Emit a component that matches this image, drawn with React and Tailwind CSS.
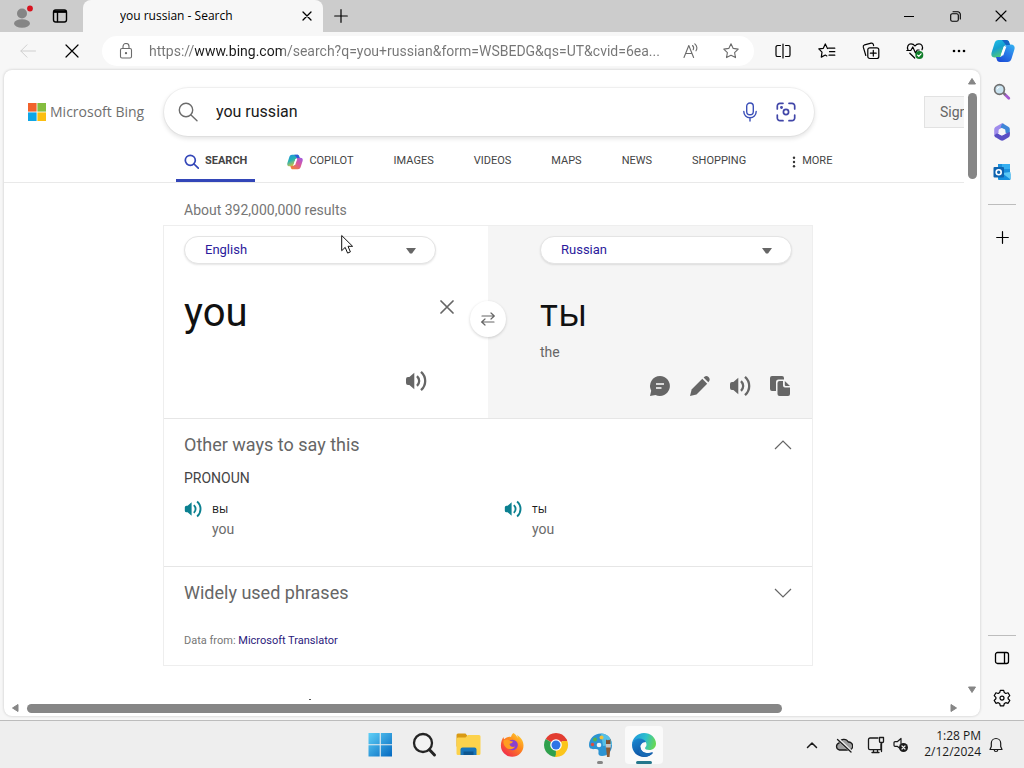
import React from "react";

const UI = "font-['Open_Sans','Noto_Sans',sans-serif]";

/* ---------- generic icons ---------- */

function Line({ size = 16, w = 1, children, className = "" }) {
  return (
    <svg
      width={size}
      height={size}
      viewBox={`0 0 ${size} ${size}`}
      fill="none"
      stroke="currentColor"
      strokeWidth={w}
      strokeLinecap="round"
      strokeLinejoin="round"
      className={`shrink-0 ${className}`}
      aria-hidden="true"
    >
      {children}
    </svg>
  );
}

const Cross = ({ size = 14, w = 1.1, className }) => (
  <Line size={size} w={w} className={className}>
    <path d={`M1 1 ${size - 1} ${size - 1}M${size - 1} 1 1 ${size - 1}`} />
  </Line>
);

const Plus = ({ size = 14 }) => (
  <Line size={size} w={1.2}>
    <path d={`M${size / 2} .7V${size - 0.7}M.7 ${size / 2}H${size - 0.7}`} />
  </Line>
);

const Speaker = ({ width = 22, className = "" }) => (
  <svg width={width} height={width} viewBox="0 0 22 22" className={`shrink-0 ${className}`} aria-hidden="true">
    <path d="M9.300 2.800v16.400L4.400 15H3A2 2 0 0 1 1 13V9a2 2 0 0 1 2-2h1.400z" fill="currentColor" />
    <path d="M12 6.200c2.900 2.800 2.900 6.800 0 9.600M16 1.800c5.600 5 5.600 13.400 0 18.400" fill="none" stroke="currentColor" strokeWidth="2.300" />
  </svg>
);

function Profile() {
  return (
    <svg width="22" height="26" viewBox="0 0 22 26" aria-hidden="true">
      <circle cx="11" cy="10.500" r="5" fill="#858585" />
      <ellipse cx="11" cy="20.500" rx="8" ry="4.200" fill="#858585" />
      <circle cx="19" cy="5.500" r="2.900" fill="#d8131f" />
    </svg>
  );
}

function Copilot({ size, warm }) {
  const id = warm ? "warm" : "cool";
  return (
    <svg width={size} height={size} viewBox="0 0 24 24" className="shrink-0" aria-hidden="true">
      <defs>
        <linearGradient id={`${id}-a`} x1="0" y1="0" x2="0.500" y2="1">
          <stop offset="0" stopColor={warm ? "#1c8fe8" : "#22c3e8"} />
          <stop offset="0.500" stopColor={warm ? "#27b3b0" : "#159fd0"} />
          <stop offset="1" stopColor={warm ? "#e8c53a" : "#58cf6c"} />
        </linearGradient>
        <linearGradient id={`${id}-b`} x1="1" y1="0" x2="0.300" y2="1">
          <stop offset="0" stopColor={warm ? "#9b5be8" : "#35b6f2"} />
          <stop offset="0.500" stopColor={warm ? "#d8569f" : "#2a7de8"} />
          <stop offset="1" stopColor={warm ? "#f0803c" : "#1c50d8"} />
        </linearGradient>
      </defs>
      <path d="M7.500 1H15c2 0 2.800 1 3.300 2.800L19 6h-3c-2 0-3 .8-3.600 2.800L10 16.500C9.400 18 8.500 18.500 7 18.500H4C1 18.500-.2 16.500.6 13.500L3.600 4C4.300 2 5.500 1 7.500 1z" fill={`url(#${id}-a)`} />
      <path d="M16.500 23H9c-2 0-2.800-1-3.300-2.800L5 18h3c2 0 3-.8 3.600-2.800L14 7.500C14.600 6 15.500 5.500 17 5.500h3c3 0 4.200 2 3.400 5l-3 9.500c-.7 2-1.900 3-3.900 3z" fill={`url(#${id}-b)`} />
      <path d="M12.800 7.500h2.600l-3.200 9H9.600z" fill="#fff" />
      <path d="M11 1h4c2 0 2.800 1 3.300 2.800L19 6h-4z" fill={warm ? "#3558d8" : "#1765c4"} />
    </svg>
  );
}

/* ---------- browser chrome ---------- */

function TitleBar() {
  return (
    <div className={`flex h-8 shrink-0 bg-[#cccccc] text-black ${UI}`}>
      <button aria-label="Profile" className="flex w-11 items-center justify-center">
        <Profile />
      </button>
      <button aria-label="Tab actions" className="mr-[7px] flex w-8 items-center justify-center">
        <Line size={16} w={1.4}>
          <rect x="1.500" y="2" width="13" height="12" rx="2.200" />
          <path d="M2 4h12M5.500 5v8.500" strokeWidth="1.400" />
          <path d="M2.500 3.500h11" strokeWidth="2.200" />
        </Line>
      </button>
      <div className="flex w-60 items-center rounded-t-lg bg-[#f7f7f7] pl-[37px] pr-2 text-xs">
        <span className="flex-1 truncate">you russian - Search</span>
        <button aria-label="Close tab" className="flex size-4 items-center justify-center">
          <Cross size={10} w={1.3} />
        </button>
      </div>
      <button aria-label="New tab" className="flex w-[35px] items-center justify-center">
        <Plus size={14} />
      </button>
      <div className="ml-auto flex">
        <button aria-label="Minimize" className="flex w-[46px] items-center justify-center">
          <Line size={10} w={1.1}><path d="M0 5.500h10" /></Line>
        </button>
        <button aria-label="Restore" className="flex w-[46px] items-center justify-center">
          <Line size={11} w={1.1}>
            <rect x="0.700" y="2.700" width="7.600" height="7.600" rx="1.600" />
            <path d="M3 .8h4.800a2.500 2.500 0 0 1 2.500 2.500V8" />
          </Line>
        </button>
        <button aria-label="Close" className="flex w-[46px] items-center justify-center">
          <Cross size={12} w={1.1} />
        </button>
      </div>
    </div>
  );
}

function ToolButton({ label, children, className = "w-11" }) {
  return (
    <button aria-label={label} className={`flex h-full shrink-0 items-center justify-center ${className}`}>
      {children}
    </button>
  );
}

const starPath = "M9 1.800l2.200 4.600 5 .7-3.600 3.500.9 5L9 13.200l-4.500 2.400.9-5L1.800 7.100l5-.7z";

function Toolbar() {
  return (
    <div className={`flex h-[38px] shrink-0 bg-[#f7f7f7] pl-[6px] text-black ${UI}`}>
      <ToolButton label="Back" className="w-11 text-[#cfcfcf]">
        <Line size={16}><path d="M15.500 8H1M7 1.800.8 8 7 14.200" /></Line>
      </ToolButton>
      <ToolButton label="Stop"><Cross size={14} w={1.2} /></ToolButton>
      <div className="my-1 ml-2 flex min-w-0 flex-1 items-center rounded-full bg-white pr-[3px] text-[#6b6b6b]">
        <span className="flex w-[47px] shrink-0 justify-center">
          <Line size={16} w={1.100}>
            <rect x="2.500" y="5.500" width="11" height="9.500" rx="1.500" />
            <path d="M5 5.500V3.500a3 3 0 0 1 6 0v2" />
            <circle cx="8" cy="10.200" r=".6" fill="currentColor" />
          </Line>
        </span>
        <input
          aria-label="Address"
          readOnly
          value="https://www.bing.com/search?q=you+russian&form=WSBEDG&qs=UT&cvid=6ea..."
          className="min-w-0 flex-1 bg-[linear-gradient(90deg,#757575_46px,#1a1a1a_46px,#1a1a1a_133px,#757575_133px)] bg-clip-text font-['Roboto','Open_Sans',sans-serif] text-sm text-transparent outline-none"
        />
        <ToolButton label="Read aloud" className="w-10">
          <Line size={18} w={1.1}>
            <path d="M2 15.500 6.800 3.500l4.800 12M3.500 11.500h6.600M10.500 3.500c1.300 1.200 1.300 3 .7 4.200M12.800 1.800c2.500 2.300 2.400 5 1.200 7" />
          </Line>
        </ToolButton>
        <ToolButton label="Add to favorites" className="w-10">
          <Line size={18} w={1.1}><path d={starPath} /></Line>
        </ToolButton>
      </div>
      <div className="ml-[7px] flex shrink-0">
        <ToolButton label="Split screen">
          <Line size={16} w={1.200}><path d="M8 1v14M5.500 2.500H2.600A1.600 1.600 0 0 0 1 4.100v7.800a1.600 1.600 0 0 0 1.600 1.600h2.900M10.500 2.500h2.900A1.600 1.600 0 0 1 15 4.100v7.800a1.600 1.600 0 0 1-1.600 1.600h-2.900" /></Line>
        </ToolButton>
        <ToolButton label="Favorites">
          <Line size={18} w={1.2}><path d="M9.500 6.500 7.300 1.900 5.300 6.300l-4.500.6L4 10.200l-.7 4.900 4-2.100 1.500.9M10.500 6.200h6.300M11.500 9.700h5.300M11 13.200h5.800" /></Line>
        </ToolButton>
        <ToolButton label="Collections">
          <Line size={18} w={1.2}>
            <rect x="5.800" y="5.800" width="11" height="10.700" rx="2" />
            <path d="M11.300 8.300v5.800M8.400 11.200h5.800M3.800 13.500 1.300 5.200a2 2 0 0 1 1.300-2.400l6.500-1.600a2 2 0 0 1 2.300 1.500l.2.900" />
          </Line>
        </ToolButton>
        <ToolButton label="Browser essentials">
          <Line size={18} w={1.2}>
            <path d="M2 8C.5 4.500 2.500 1.800 5 1.800c1.700 0 3 .8 4 2.200 1-1.400 2.300-2.200 4-2.200 2.500 0 4.500 2.700 3 6M.8 8.500h4L6.800 5l2.700 6 1.700-3h2M3.800 11.200 8.700 16" />
            <circle cx="13.300" cy="13" r="4" fill="#117d2a" stroke="none" />
            <path d="m11.500 13.100 1.300 1.300 2.300-2.600" stroke="#fff" />
          </Line>
        </ToolButton>
        <ToolButton label="Settings and more">
          <svg width="14" height="4" viewBox="0 0 14 4" aria-hidden="true">
            <circle cx="2" cy="2" r="1.300" /><circle cx="7" cy="2" r="1.300" /><circle cx="12" cy="2" r="1.300" />
          </svg>
        </ToolButton>
        <ToolButton label="Copilot" className="w-[43px]"><Copilot size={24} /></ToolButton>
      </div>
    </div>
  );
}

function Sidebar() {
  return (
    <aside className="flex w-11 shrink-0 flex-col items-center pt-[2px]">
      <button aria-label="Search" className="flex size-10 items-center justify-center">
        <svg width="18" height="18" viewBox="0 0 18 18" aria-hidden="true">
          <path d="m11.500 11 4.300 4.300" stroke="#a45bd0" strokeWidth="2.800" strokeLinecap="round" />
          <path d="m10.500 10 2 2" stroke="#777" strokeWidth="2" />
          <circle cx="6.500" cy="6.500" r="4.900" fill="#c9e3f0" stroke="#707070" strokeWidth="1.700" />
          <path d="M4 6.300A3 3 0 0 1 6.500 4" stroke="#fff" fill="none" />
        </svg>
      </button>
      <button aria-label="Microsoft 365" className="flex size-10 items-center justify-center">
        <svg width="18" height="18" viewBox="0 0 18 18" aria-hidden="true">
          <path d="M8.500.5 2.800 3.700C1.700 4.400 1.200 5.200 1.200 6.500v5.400l4.500-2V6.800l5.500-3.300V1.800C11 .6 9.600 0 8.500.5z" fill="#a08cec" />
          <path d="m10.300.8 5 2.900c1 .6 1.500 1.500 1.500 2.700v5.400L12.300 9.500V6.800L7.500 4.600 9 .8z" fill="#3f86d8" />
          <path d="M16.800 9v3c0 1.200-.5 2-1.500 2.600l-4.600 2.700c-1 .6-2.200.6-3.200 0L3 14.600c-1-.6-1.800-1.500-1.800-2.700l3-1.600 4.700 2.500 4.500-2.600z" fill="#5a4fc4" />
          <circle cx="9" cy="8.700" r="3.300" fill="#f7f7f7" />
        </svg>
      </button>
      <button aria-label="Outlook" className="flex size-10 items-center justify-center">
        <svg width="18" height="18" viewBox="0 0 18 18" aria-hidden="true">
          <path d="M5 1h12v11H5z" fill="#1a8fdc" />
          <path d="M9 1h8v5H9z" fill="#35aef0" />
          <path d="M5 10.500h12.500V16a1 1 0 0 1-1 1H6a1 1 0 0 1-1-1z" fill="#1490df" />
          <path d="M17.500 9v7.500L9 10z" fill="#5cc8f5" />
          <rect x="0.500" y="4" width="10.500" height="10.500" rx="1" fill="#0f64b0" />
          <circle cx="5.700" cy="9.200" r="2.500" fill="none" stroke="#fff" strokeWidth="1.600" />
        </svg>
      </button>
      <div className="mt-3 h-px w-7 bg-[#bdbdbd]" />
      <button aria-label="Customize" className="mt-3 flex size-10 items-center justify-center">
        <Plus size={13} />
      </button>
      <div className="mt-auto h-px w-7 bg-[#bdbdbd]" />
      <button aria-label="Toggle sidebar" className="mt-[2px] flex size-10 items-center justify-center">
        <Line size={16} w={1.3}>
          <rect x="1.500" y="2.500" width="13" height="11" rx="2" /><path d="M10.500 3v10" />
        </Line>
      </button>
      <button aria-label="Settings" className="mb-[2px] flex size-10 items-center justify-center">
        <Line size={18} w={1.2}>
          <path d="M7.300 1.300h3.400l.6 2.300 1.500.9 2.300-.7 1.700 2.900L15.100 8.400v1.400l1.700 1.600-1.700 2.900-2.300-.6-1.500.8-.6 2.300H7.300l-.6-2.300-1.500-.8-2.300.6-1.700-2.900 1.700-1.600V8.400L1.200 6.700l1.700-2.900 2.300.7 1.500-.9z" />
          <circle cx="9" cy="9.100" r="2" />
        </Line>
      </button>
    </aside>
  );
}

/* ---------- search page ---------- */

const scopes = ["IMAGES", "VIDEOS", "MAPS", "NEWS", "SHOPPING"];

function Header() {
  return (
    <header className="border-b border-[#e9e9e9] pt-[18px]">
      <div className="flex h-12 items-center">
        <a href="#home" className="ml-6 flex w-[136px] shrink-0 items-center gap-1 font-['Open_Sans','Noto_Sans',sans-serif] text-sm font-medium text-[#6f6f6f]">
          <svg width="18" height="18" viewBox="0 0 18 18" className="shrink-0" aria-hidden="true">
            <path d="M0 0h8.600v8.600H0z" fill="#f1622c" /><path d="M9.400 0H18v8.600H9.400z" fill="#84bd3f" />
            <path d="M0 9.400h8.600V18H0z" fill="#0fa6e6" /><path d="M9.400 9.400H18V18H9.400z" fill="#fbbe10" />
          </svg>
          <span className="whitespace-nowrap">Microsoft Bing</span>
        </a>
        <form className="flex h-12 w-[650px] shrink-0 items-center rounded-full bg-white pl-[14px] pr-4 shadow-[0_0_0_1px_rgba(0,0,0,0.04),0_2px_4px_1px_rgba(0,0,0,0.1)]">
          <span className="text-[#6b6b6b]">
            <Line size={20} w={1.400}><circle cx="8" cy="8" r="6.700" /><path d="m13 13 6 5.800" /></Line>
          </span>
          <input aria-label="Search" defaultValue="you russian" className="ml-[18px] min-w-0 flex-1 text-base text-[#1a1a1a] outline-none" />
          <button type="button" aria-label="Search using voice" className="mr-4 text-[#3c50b8]">
            <Line size={20} w={1.4}>
              <rect x="6.700" y="1" width="6.600" height="11.800" rx="3.300" />
              <path d="M3.800 9.500a6.200 6.200 0 0 0 12.400 0M10 15.800V19" />
            </Line>
          </button>
          <button type="button" aria-label="Search using an image" className="mr-[2px] text-[#4146a8]">
            <Line size={20} w={1.7}>
              <path d="M7 1.300H4A2.700 2.700 0 0 0 1.300 4v3M13 1.300h3A2.700 2.700 0 0 1 18.700 4v3M7 18.700H4A2.700 2.700 0 0 1 1.300 16v-3M13 18.700h3a2.700 2.700 0 0 0 2.700-2.700v-3" />
              <circle cx="10" cy="10" r="2.600" />
              <circle cx="5.500" cy="5.500" r=".6" fill="currentColor" />
            </Line>
          </button>
        </form>
        <button className="ml-[110px] h-8 shrink-0 border border-[#e2e2e2] bg-[#f5f5f5] px-[15px] text-sm text-[#666666]">Sign in</button>
      </div>
      <nav className="ml-[172px] flex h-[46px] gap-6 text-[11px] text-[#444444]">
        <a href="#search" className="flex items-center gap-[6px] border-b-[3px] border-[#3346b8] px-2 pt-2 font-bold">
          <span className="text-[#3346b8]">
            <Line size={15} w={1.700}><circle cx="6.300" cy="6.300" r="5" /><path d="m10 10 4.300 4.200" /></Line>
          </span>
          SEARCH
        </a>
        <a href="#copilot" className="flex items-center gap-[6px] border-b-[3px] border-transparent px-2 pt-2">
          <Copilot size={16} warm />
          COPILOT
        </a>
        {scopes.map((s) => (
          <a key={s} href={`#${s.toLowerCase()}`} className="flex items-center border-b-[3px] border-transparent px-2 pt-2">{s}</a>
        ))}
        <button className="ml-[6px] flex items-center gap-[6px] border-b-[3px] border-transparent px-2 pt-2">
          <svg width="4" height="12" viewBox="0 0 4 12" fill="#333" aria-hidden="true">
            <circle cx="2" cy="1.800" r="1.200" /><circle cx="2" cy="6" r="1.200" /><circle cx="2" cy="10.200" r="1.200" />
          </svg>
          MORE
        </button>
      </nav>
    </header>
  );
}

function LanguageSelect({ label, value }) {
  return (
    <div className="relative w-[252px]">
      <select
        aria-label={label}
        defaultValue={value}
        className="h-7 w-full appearance-none rounded-full border border-[#e4e4e4] bg-white px-5 text-[13px] text-[#2b1a9c] shadow-[0_1px_2px_rgba(0,0,0,0.1)]"
      >
        <option>English</option>
        <option>Russian</option>
      </select>
      <svg width="10" height="6" viewBox="0 0 10 6" fill="#666" className="pointer-events-none absolute right-5 top-3" aria-hidden="true">
        <path d="M0 0h10L6 5.500H4z" />
      </svg>
    </div>
  );
}

function Chevron({ up }) {
  return (
    <svg width="18" height="10" viewBox="0 0 18 10" fill="none" stroke="#666" strokeWidth="1.200" aria-hidden="true">
      <path d={up ? "M1 9l8-8 8 8" : "M1 1l8 8 8-8"} />
    </svg>
  );
}

function Meaning({ word }) {
  return (
    <div className="flex w-80 shrink-0 gap-[10px]">
      <button aria-label={`Listen to ${word}`} className="flex h-5 items-center text-[#0b8090]"><Speaker width={18} /></button>
      <div className="leading-5">
        <p className={`text-xs leading-5 text-[#1a1a1a] ${UI}`}>{word}</p>
        <p className="text-sm text-[#6b6b6b]">you</p>
      </div>
    </div>
  );
}

function Translator() {
  return (
    <section className="relative ml-[159px] w-[650px] border border-[#eeeeee] text-[#666666]">
      <div className="flex h-48">
        <div className="w-[324px] px-5 pt-[10px]">
          <LanguageSelect label="Translate from" value="English" />
          <div className="mt-[25px] flex h-12 items-start">
            <textarea aria-label="Text to translate" rows="1" defaultValue="you" className="h-12 w-[256px] shrink-0 resize-none overflow-hidden text-[40px] leading-[48px] text-[#111111] outline-none" />
            <button aria-label="Clear" className="mt-[11px] shrink-0"><Cross size={14} w={1.700} /></button>
          </div>
          <button aria-label="Listen to source" className="ml-[221px] mt-[33px] block"><Speaker /></button>
        </div>
        <div className="flex-1 bg-[#f5f5f5] pl-[52px] pr-5 pt-[10px]">
          <LanguageSelect label="Translate to" value="Russian" />
          <p className={`mt-[23px] text-[38px] leading-[48px] text-[#111111] ${UI}`}>ты</p>
          <p className="mt-[7px] text-sm leading-5">the</p>
          <div className="mt-[13px] flex justify-end gap-[18px] pr-px">
            <button aria-label="Feedback">
              <svg width="22" height="22" viewBox="0 0 22 22" aria-hidden="true">
                <path d="M11 1a10 10 0 1 1-4.500 19L1 21l1.200-5.200A10 10 0 0 1 11 1z" fill="currentColor" />
                <path d="M7 9h8M7 13h5.500" stroke="#fff" strokeWidth="1.700" />
              </svg>
            </button>
            <button aria-label="Edit">
              <svg width="22" height="22" viewBox="0 0 22 22" fill="currentColor" aria-hidden="true">
                <path d="m13.300 3.800 4.900 4.900L7.500 19.400 1 21l1.600-6.500z" /><path d="m14.600 2.500.9-.8c1.300-1 2.800-.8 4 .2 1.200 1.200 1.600 2.900.7 4.200l-.9 1.200z" />
              </svg>
            </button>
            <button aria-label="Listen to translation"><Speaker /></button>
            <button aria-label="Copy">
              <svg width="22" height="22" viewBox="0 0 22 22" fill="currentColor" aria-hidden="true">
                <path d="M3 1h10a2 2 0 0 1 2 2v1.500H9.500A2.500 2.500 0 0 0 7 7v9H3a2 2 0 0 1-2-2V3a2 2 0 0 1 2-2z" />
                <path d="M10.500 6H14v4.500a2 2 0 0 0 2 2h5V19a2 2 0 0 1-2 2h-8.500a2 2 0 0 1-2-2V8a2 2 0 0 1 2-2z" />
                <path d="m15.800 6 5.200 5h-4.200a1 1 0 0 1-1-1z" />
              </svg>
            </button>
          </div>
        </div>
      </div>
      <button aria-label="Swap languages" className="absolute left-[306px] top-[75px] flex size-9 items-center justify-center rounded-full bg-white shadow-[0_1px_3px_rgba(0,0,0,0.18)]">
        <Line size={16} w={1.2}><path d="M2 5h12M11 2l3.300 3L11 8M14 11H1.500M5 8l-3.300 3L5 14" /></Line>
      </button>
      <svg width="14" height="21" viewBox="0 0 14 21" className="pointer-events-none absolute left-[177px] top-2" aria-hidden="true">
        <path d="M.7 1.500v15.200l3.500-3.300 2.400 5.700 2.800-1.200L7 12.300h4.600z" fill="#fff" stroke="#111" strokeWidth="1" />
      </svg>
      <div className="h-[148px] border-t border-[#e6e6e6] px-5 pt-[14px]">
        <button aria-expanded="true" className="flex w-full items-center justify-between text-lg leading-6">
          Other ways to say this <Chevron up />
        </button>
        <h3 className="mt-[11px] text-sm leading-5 text-[#444444]">PRONOUN</h3>
        <div className="mt-[11px] flex"><Meaning word="вы" /><Meaning word="ты" /></div>
      </div>
      <div className="h-[99px] border-t border-[#e6e6e6] px-5 pt-[14px]">
        <button aria-expanded="false" className="flex w-full items-center justify-between text-lg leading-6">
          Widely used phrases <Chevron />
        </button>
        <p className="mt-7 text-[11px] leading-4 text-[#767676]">
          Data from: <a href="#translator" className="text-[#2b1a7c]">Microsoft Translator</a>
        </p>
      </div>
    </section>
  );
}

function Arrow({ d, className = "" }) {
  return (
    <svg width="8" height="8" viewBox="0 0 8 8" fill="#868686" stroke="#868686" strokeLinejoin="round" className={`shrink-0 ${className}`} aria-hidden="true">
      <path d={d} />
    </svg>
  );
}

function Page() {
  return (
    <main className="mb-1 ml-1 grid min-w-0 flex-1 grid-cols-[minmax(0,1fr)_16px] grid-rows-[minmax(0,1fr)_16px] rounded-lg bg-white shadow-[0_0_3px_rgba(0,0,0,0.2)]">
      <div className="overflow-hidden font-['Roboto','Open_Sans',sans-serif]">
        <div className="w-[1179px]">
          <Header />
          <p className="ml-[180px] pb-[5px] pt-[17px] text-sm leading-5 text-[#767676]">About 392,000,000 results</p>
          <Translator />
          <div className="ml-[305px] mt-[33px] h-px w-[2px] bg-[#555555]" />
        </div>
      </div>
      <div className="flex flex-col items-center pb-[6px] pt-[7px]">
        <Arrow d="M4 1.500 7.500 7H.5z" />
        <div className="mt-2 h-[86px] w-[9px] rounded-full bg-[#868686]" />
        <Arrow d="M4 6.500.5 1h7z" className="mt-auto" />
      </div>
      <div className="flex items-center pl-[7px] pr-[6px]">
        <Arrow d="M1.500 4 7 .5v7z" />
        <div className="ml-2 h-[9px] w-[755px] rounded-full bg-[#868686]" />
        <Arrow d="M6.500 4 1 .5v7z" className="ml-auto" />
      </div>
    </main>
  );
}

/* ---------- taskbar ---------- */

const apps = [
  {
    name: "Start",
    art: (
      <>
        <defs><linearGradient id="win" x1="0" y1="0" x2="1" y2="1"><stop offset="0" stopColor="#5fd0f7" /><stop offset="1" stopColor="#0468c0" /></linearGradient></defs>
        <path d="M2.500 2h11.200v11.200H2.500zM14.800 2H26v11.200H14.800zM2.500 14.300h11.200v11.200H2.500zM14.800 14.300H26v11.200H14.800z" fill="url(#win)" />
      </>
    ),
  },
  {
    name: "Search",
    art: (
      <>
        <circle cx="13" cy="12" r="9" fill="#f3f3f3" stroke="#242424" strokeWidth="2.300" />
        <path d="m19.500 18.700 5 5.300" stroke="#242424" strokeWidth="3" strokeLinecap="round" />
      </>
    ),
  },
  {
    name: "File Explorer",
    art: (
      <>
        <path d="M2.500 4A1.500 1.500 0 0 1 4 2.500h7.500L14 5.500h12v10H2.500z" fill="#d99a14" />
        <path d="M4 6.500h7.500l2.500-2.500h11A1.500 1.500 0 0 1 26.500 5.500v17a1.500 1.500 0 0 1-1.500 1.500H4A1.500 1.500 0 0 1 2.500 22.500V8A1.500 1.500 0 0 1 4 6.500z" fill="#fcd24c" />
        <path d="M6.500 24v-5.500a2 2 0 0 1 2-2h12a2 2 0 0 1 2 2V24z" fill="#1875ba" />
        <path d="M9.500 20.500h10V24h-10z" fill="#0d568f" />
      </>
    ),
  },
  {
    name: "Firefox",
    art: (
      <>
        <defs><linearGradient id="fox" x1="1" y1="0" x2="0.200" y2="1"><stop offset="0" stopColor="#ffe235" /><stop offset="0.450" stopColor="#ff8a1d" /><stop offset="1" stopColor="#f0264e" /></linearGradient></defs>
        <path d="M15.500 2c2.500 1.500 3.500 3.500 4 5 0-1 0-2-.5-3C23 6.500 25.500 10 25.500 14.500a11.300 11.300 0 0 1-22.600 0C2.900 11 4 8 5.500 6c0 1 .3 1.700.7 2.300C8 6.500 10.500 5.500 13 6c.3-1.500 1.200-3 2.500-4z" fill="url(#fox)" />
        <circle cx="14.500" cy="14" r="5.300" fill="#8a3fd0" />
        <path d="M5.500 9.500c2-1.500 5-1.500 6.500.5l3 .5c-.5 1.500-2.500 2-3.500 2.500.5 2.500 3 3.500 5.500 2.500-1.500 3-6 3.800-8.700 1.300C6 15 5 12 5.500 9.500z" fill="#ff9d22" />
      </>
    ),
  },
  {
    name: "Chrome",
    art: (
      <>
        <path d="M14 14 3.600 8a12 12 0 0 1 20.800 0z" fill="#e23c31" />
        <path d="M14 14h0l-.1 12A12 12 0 0 1 3.600 8z" fill="#2fa04c" />
        <path d="M14 14 24.400 8A12 12 0 0 1 13.900 26z" fill="#fbc51b" />
        <path d="M14 8h10.400a12 12 0 0 1 .8 2H14zM8.800 11 3.600 8" fill="#e23c31" />
        <path d="M19.200 17 14 26l-1-.1 3-7z" fill="#fbc51b" />
        <circle cx="14" cy="14" r="5.800" fill="#fff" />
        <circle cx="14" cy="14" r="4.500" fill="#2f74e6" />
      </>
    ),
  },
  {
    name: "Paint",
    running: "bg-[#858585] w-[6px]",
    art: (
      <>
        <path d="M15 2.500C8 2.500 3 8 3 14c0 4 3 4.500 6 4 2.500-.3 4 .5 3.500 3-.5 2.500.5 4 3.500 4 6 0 10-5 10-11S21.500 2.500 15 2.500z" fill="#2c93d2" />
        <path d="M15 2.500c6.500 0 11 5 11 11.500l-9 1z" fill="#56bfe6" />
        <circle cx="9" cy="8.500" r="2" fill="#54b34c" /><circle cx="15.500" cy="6.500" r="2" fill="#efc13a" />
        <circle cx="6.500" cy="13.500" r="1.700" fill="#dc4d3f" /><circle cx="13" cy="14" r="2.300" fill="#eaf5fa" />
        <path d="M20 16h4.500L23.500 26h-2.500z" fill="#8a5a33" /><path d="M19.800 13h5v3.500h-5z" fill="#c4c4c4" /><path d="M20 8.500c1 1 3.500 1 4.500-.5V13H20z" fill="#7d5133" />
      </>
    ),
  },
  {
    name: "Edge",
    active: true,
    running: "bg-[#24778c] w-4",
    art: (
      <>
        <defs>
          <linearGradient id="edge-a" x1="0" y1="0.300" x2="1" y2="0.500"><stop offset="0" stopColor="#1f96dc" /><stop offset="0.550" stopColor="#2cc0cc" /><stop offset="1" stopColor="#69d850" /></linearGradient>
          <linearGradient id="edge-b" x1="0" y1="0" x2="0.600" y2="1"><stop offset="0" stopColor="#1a8bd4" /><stop offset="1" stopColor="#0d4b9c" /></linearGradient>
        </defs>
        <path d="M2 14C2 7 7.500 2 14 2s12 4.800 12 10.500c0 4-3 6.500-6.700 6.500-3 0-4.300-1-4.300-2 0-.7 1.500-1.300 1.500-3.500 0-3-3-5.500-6.500-5.500-5 0-8 3.500-8 6z" fill="url(#edge-a)" />
        <path d="M2 14c0-4 3.500-6.500 7.500-6.500 3 0 5.500 1.500 6.500 3.500-4 0-6 3-5.500 6 .6 4 5 6.500 11.500 4.500l1 .5A12 12 0 0 1 14 26C7.500 26 2 21 2 14z" fill="url(#edge-b)" />
        <path d="M10.500 16c0 5 6 7.500 12.500 5.300C20.500 25 16 26.500 13 25.500c-4-1.500-5.500-6-2.500-9.500z" fill="#1769b4" />
      </>
    ),
  },
];

function Taskbar() {
  return (
    <footer className={`grid h-12 shrink-0 grid-cols-[1fr_auto_1fr] border-t border-[#bcbcbc] bg-[#eeeeee] text-[#1a1a1a] ${UI}`}>
      <div />
      <div className="flex">
        {apps.map((a) => (
          <button key={a.name} aria-label={a.name} className="flex w-11 items-center justify-center">
            <span className={`relative flex h-[38px] w-[38px] items-center justify-center rounded ${a.active ? "bg-[#fafafa]" : ""}`}>
              <svg width="28" height="28" viewBox="0 0 28 28" fill="none" aria-hidden="true">{a.art}</svg>
              {a.running && <span className={`absolute bottom-0 h-[3px] rounded-full ${a.running}`} />}
            </span>
          </button>
        ))}
      </div>
      <div className="flex items-center justify-end pr-5">
        <button aria-label="Show hidden icons" className="mr-[17px]">
          <Line size={12} w={1.5}><path d="M1.500 8.500 6 4l4.500 4.500" /></Line>
        </button>
        <button aria-label="OneDrive" className="mr-[14px]">
          <Line size={18} w={1.3}>
            <path d="M4.500 14A3.500 3.500 0 0 1 4 7.200 5 5 0 0 1 13.300 6 4 4 0 0 1 14 14z" fill="#a0a0a0" />
            <path d="M2.500 2.500 16 15.500" stroke="#eee" strokeWidth="3" /><path d="M2.500 3.500 16 16" />
          </Line>
        </button>
        <button aria-label="Network" className="mr-[8px]">
          <Line size={18} w={1.3}>
            <path d="M11 2H3.200C2 2 1.500 2.600 1.500 3.500v8.700c0 .8.600 1.400 1.400 1.400H14V8M5 16.500h7M6.500 14v2M10.500 14v2" />
            <path d="M12.500 1.500h4v4a1 1 0 0 1-1 1h-2a1 1 0 0 1-1-1zM14.500 6.500v9" />
          </Line>
        </button>
        <button aria-label="Volume muted" className="mr-[15px]">
          <Line size={16} w={1.2}>
            <path d="M6.500 11 4.200 9.300H2a1 1 0 0 1-1-1V5.700a1 1 0 0 1 1-1h2.200L8 1.500v5" />
            <circle cx="10.500" cy="10.500" r="4.500" fill="#1a1a1a" stroke="none" />
            <path d="m9 9 3 3M12 9l-3 3" stroke="#eee" />
          </Line>
        </button>
        <div className="pb-[2px] text-right text-xs leading-4">
          <p>1:28 PM</p>
          <p>2/12/2024</p>
        </div>
        <button aria-label="Notifications" className="ml-[7px]">
          <Line size={16} w={1.2}><path d="M8 1.500a4.700 4.700 0 0 0-4.700 4.700v3.300L2 12.500h12l-1.300-3V6.200A4.700 4.700 0 0 0 8 1.500zM6.200 12.700a1.800 1.800 0 0 0 3.600 0" /></Line>
        </button>
      </div>
    </footer>
  );
}

export default function App() {
  return (
    <div className="flex h-screen flex-col overflow-hidden bg-[#f7f7f7]">
      <TitleBar />
      <Toolbar />
      <div className="flex min-h-0 flex-1">
        <Page />
        <Sidebar />
      </div>
      <Taskbar />
    </div>
  );
}
